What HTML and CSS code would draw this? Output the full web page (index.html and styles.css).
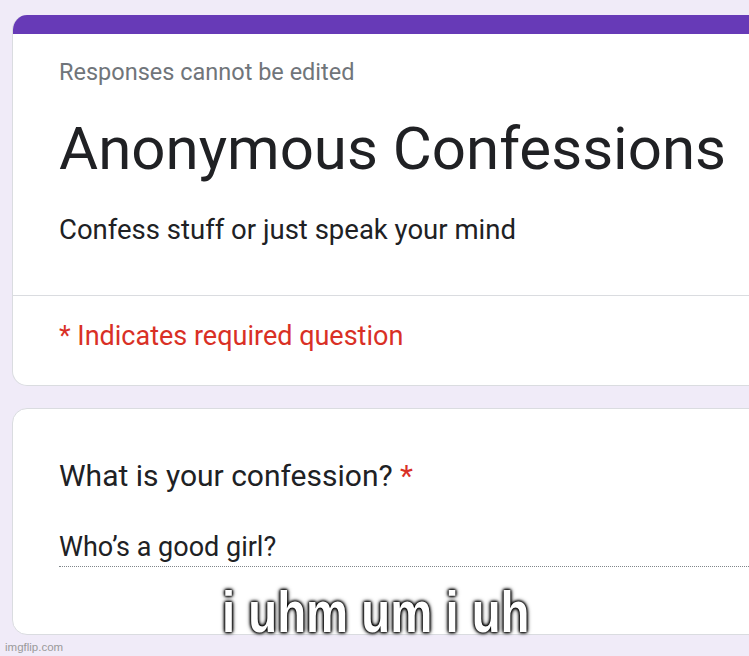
FILE: index.html
```html
<!DOCTYPE html>
<html>
<head>
<meta charset="utf-8">
<link rel="stylesheet" href="styles.css">
</head>
<body>
<div class="page">
  <div class="card card-head">
    <div class="band"></div>
    <div class="head">
      <div class="note">Responses cannot be edited</div>
      <div class="title">Anonymous Confessions</div>
      <div class="desc">Confess stuff or just speak your mind</div>
    </div>
    <div class="req">* Indicates required question</div>
  </div>
  <div class="card card-q">
    <div class="question">What is your confession? <span class="star">*</span></div>
    <div class="answer">Who’s a good girl?</div>
  </div>
</div>
<div class="caption">i uhm um i uh</div>
<div class="mark">imgflip.com</div>
</body>
</html>
```
FILE: styles.css
```css
html, body {
  margin: 0;
  padding: 0;
  height: 100%;
  overflow: hidden;
}
body {
  background: #f0ebf8;
  font-family: Roboto, "Liberation Sans", sans-serif;
  color: #202124;
  position: relative;
}
.page {
  padding: 15px 0 0 12px;
  display: flex;
  flex-direction: column;
  gap: 22px;
}
.card {
  background: #fff;
  border: 1px solid #dadce0;
  border-radius: 15px;
  width: 780px;
  box-sizing: border-box;
  overflow: hidden;
}
.card-head {
  border-top: none;
}
.band {
  height: 19px;
  background: #673ab7;
}
.head {
  padding: 24px 0 49px 46px;
  border-bottom: 1px solid #dadce0;
}
.note {
  font-size: 23.5px;
  line-height: 28px;
  color: #70757a;
}
.title {
  font-size: 60px;
  line-height: 70px;
  margin-top: 28px;
  color: #202124;
  letter-spacing: 0;
}
.desc {
  font-size: 27.5px;
  line-height: 32px;
  margin-top: 30px;
}
.req {
  font-size: 27px;
  line-height: 32px;
  color: #d93025;
  padding: 24px 0 33px 46px;
}
.card-q {
  padding: 49px 0 0 46px;
  height: 227px;
}
.question {
  font-size: 30px;
  line-height: 36px;
}
.star {
  color: #d93025;
}
.answer {
  margin-top: 37px;
  font-size: 27px;
  line-height: 32px;
  padding-bottom: 3px;
  border-bottom: 1px dotted #80868b;
}
.caption {
  position: absolute;
  left: 222px;
  top: 582px;
  font-family: "Liberation Sans", Arial, sans-serif;
  font-weight: bold;
  font-size: 57px;
  line-height: 60px;
  color: #fff;
  white-space: nowrap;
  transform: scaleX(0.83);
  transform-origin: left top;
  text-shadow: 0 0 3px #000, 0 0 3px #000, 0 0 4px #000, 0 0 6px #000;
}
.mark {
  position: absolute;
  left: 5px;
  top: 640px;
  font-family: "Liberation Sans", Arial, sans-serif;
  font-size: 11.5px;
  line-height: 14px;
  color: #9a9a9a;
}
```
